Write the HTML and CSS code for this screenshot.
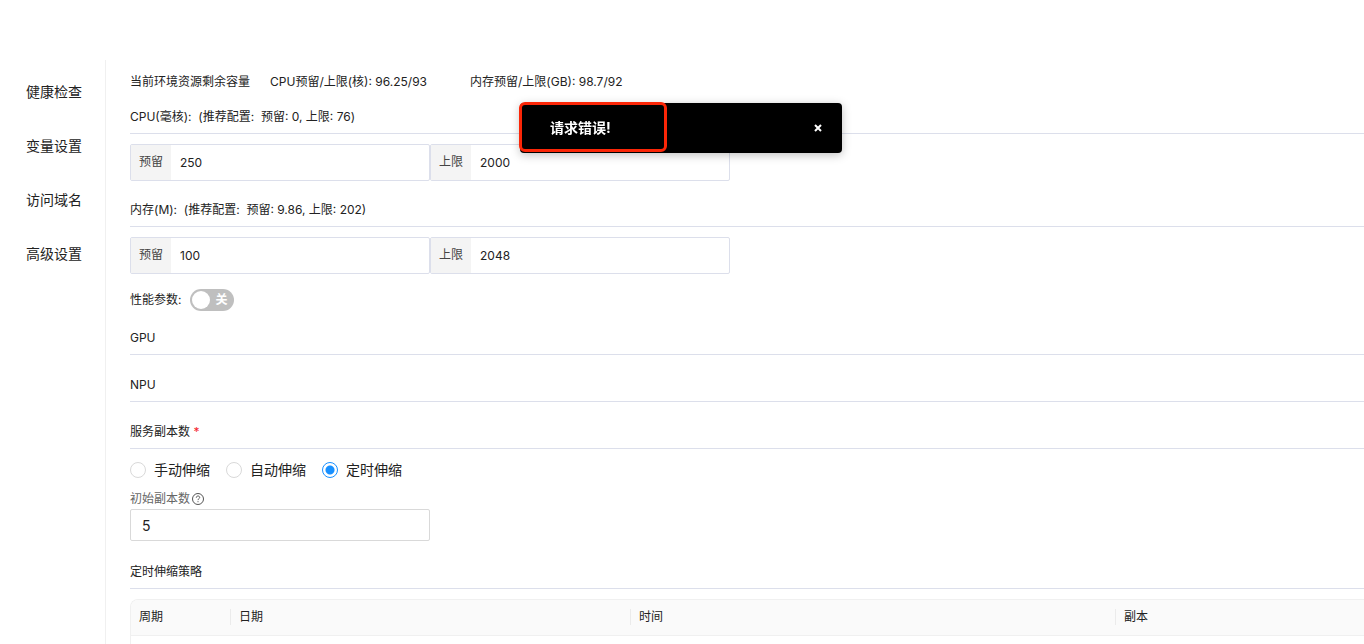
FILE: index.html
```html
<!DOCTYPE html>
<html lang="zh-CN">
<head>
<meta charset="utf-8">
<title>高级设置</title>
<link rel="stylesheet" href="styles.css">
</head>
<body>
<div class="page">
  <nav class="sidebar">
    <a class="nav-link" href="#health">健康检查</a>
    <a class="nav-link" href="#vars">变量设置</a>
    <a class="nav-link" href="#domain">访问域名</a>
    <a class="nav-link" href="#advanced">高级设置</a>
  </nav>
  <main class="content">
    <div class="summary">
      <span>当前环境资源剩余容量</span>
      <span class="quota">CPU预留/上限(核): 96.25/93</span>
      <span class="quota">内存预留/上限(GB): 98.7/92</span>
    </div>

    <h2 class="heading">CPU(毫核):&nbsp; (推荐配置:&nbsp; 预留: 0, 上限: 76)</h2>
    <div class="limits">
      <label class="field"><span class="addon">预留</span><input class="field-input" type="text" value="250"></label>
      <label class="field"><span class="addon">上限</span><input class="field-input" type="text" value="2000"></label>
    </div>

    <h2 class="heading">内存(M):&nbsp; (推荐配置:&nbsp; 预留: 9.86, 上限: 202)</h2>
    <div class="limits">
      <label class="field"><span class="addon">预留</span><input class="field-input" type="text" value="100"></label>
      <label class="field"><span class="addon">上限</span><input class="field-input" type="text" value="2048"></label>
    </div>

    <div class="perf">
      <span id="perf-label">性能参数:</span>
      <button class="switch" type="button" role="switch" aria-checked="false" aria-labelledby="perf-label"><span class="knob"></span><span>关</span></button>
    </div>

    <h2 class="heading heading-spaced">GPU</h2>
    <h2 class="heading heading-spaced">NPU</h2>
    <h2 class="heading">服务副本数 <span class="required">*</span></h2>

    <div class="radios">
      <label class="radio"><input class="radio-input" type="radio" name="scale">手动伸缩</label>
      <label class="radio"><input class="radio-input" type="radio" name="scale">自动伸缩</label>
      <label class="radio"><input class="radio-input" type="radio" name="scale" checked>定时伸缩</label>
    </div>

    <div class="replicas">
      <label class="replicas-label" for="replicas">初始副本数
        <svg class="help" viewBox="0 0 12 12" aria-hidden="true"><circle cx="6" cy="6" r="5.5"/><path d="M4.300 4.700C4.300 3.600 5 3 6 3s1.700.6 1.700 1.500C7.700 5.700 6 5.700 6 7.100"/><path d="M6 8.200v1"/></svg>
      </label>
      <input class="replicas-input" id="replicas" type="text" value="5">
    </div>

    <h2 class="heading">定时伸缩策略</h2>
    <div class="table-wrap">
      <table class="table">
        <colgroup><col class="col-cycle"><col class="col-date"><col class="col-time"><col></colgroup>
        <thead>
          <tr>
            <th><span class="th-text">周期</span></th>
            <th><span class="th-text">日期</span></th>
            <th><span class="th-text">时间</span></th>
            <th>副本</th>
          </tr>
        </thead>
        <tbody><tr><td></td><td></td><td></td><td></td></tr></tbody>
      </table>
    </div>
  </main>
</div>

<div class="toast" role="alert">
  <span class="toast-text">请求错误!</span>
  <button class="toast-close" type="button" aria-label="关闭"><svg class="cross" viewBox="0 0 8 8"><path d="M1 1l6 6M7 1L1 7"/></svg></button>
  <div class="marker"></div>
</div>
</body>
</html>
```
FILE: styles.css
```css
* { box-sizing: border-box; }
body {
  margin: 0;
  height: 100vh;
  overflow: hidden;
  background: #fff;
  color: #222;
  font: 12px/20px Inter, "Noto Sans CJK SC", sans-serif;
}
input, button { font: inherit; color: inherit; }
.page { display: flex; min-height: 100vh; padding-top: 60px; }
.sidebar {
  flex: none;
  width: 106px;
  padding: 5px 0 0 26px;
  border-right: 1px solid #f0f0f0;
}
.nav-link {
  display: block;
  color: inherit;
  font-size: 14px;
  line-height: 54px;
  text-decoration: none;
}
.content { flex: 1; min-width: 0; padding: 12px 0 0 24px; }
.summary { display: flex; gap: 20px; margin-bottom: 14px; }
.quota { min-width: 180px; }
.heading {
  margin: 0 0 10px;
  padding: 1px 0 6px;
  border-bottom: 1px solid #dcdfeb;
  font-size: 12px;
  font-weight: 400;
  line-height: 20px;
}
.heading-spaced { margin-bottom: 19px; }
.required { color: #f5222d; }
.limits { display: flex; max-width: 600px; margin-bottom: 18px; }
.field {
  display: flex;
  flex: 1;
  height: 37px;
  border: 1px solid #dcdfeb;
  border-radius: 2px;
}
.addon {
  width: 40px;
  background: #f4f4f4;
  color: #444;
  line-height: 34px;
  text-align: center;
}
.field-input {
  flex: 1;
  min-width: 0;
  padding: 0 9px;
  border: 0;
  background: none;
  outline: 0;
}
.perf { display: flex; align-items: center; gap: 9px; margin: -3px 0 16px; }
.switch {
  display: flex;
  align-items: center;
  justify-content: space-between;
  width: 44px;
  height: 22px;
  padding: 0 7px 0 2px;
  border: 0;
  border-radius: 11px;
  background: #bfbfbf;
  color: #fff;
  font-weight: 700;
}
.knob { width: 18px; height: 18px; border-radius: 50%; background: #fff; }
.radios { display: flex; gap: 16px; margin-bottom: 8px; }
.radio { display: flex; align-items: center; gap: 8px; font-size: 14px; line-height: 22px; }
.radio-input {
  width: 16px;
  height: 16px;
  margin: 0;
  appearance: none;
  border: 1px solid #d9d9d9;
  border-radius: 50%;
}
.radio-input:checked {
  border-color: #1890ff;
  background: radial-gradient(circle, #1890ff 4px, #fff 5px);
}
.replicas { max-width: 300px; margin-bottom: 20px; }
.replicas-label {
  display: flex;
  align-items: center;
  gap: 2px;
  color: #666;
}
.help { width: 12px; height: 12px; overflow: visible; fill: none; stroke: #555; stroke-width: 1; }
.replicas-input {
  display: block;
  width: 100%;
  height: 32px;
  padding: 0 11px;
  border: 1px solid #d9d9d9;
  border-radius: 2px;
  font-size: 14px;
  outline: 0;
}
.table-wrap {
  overflow: hidden;
  border: 1px solid #f0f0f0;
  border-right: 0;
  border-radius: 8px 0 0 0;
}
.table { width: 100%; border-collapse: separate; border-spacing: 0; table-layout: fixed; }
.col-cycle { width: 100px; }
.col-date { width: 400px; }
.col-time { width: 485px; }
.table th {
  height: 36px;
  padding: 0 0 2px 8px;
  border-bottom: 1px solid #f0f0f0;
  background: #fafafa;
  font-weight: 400;
  text-align: left;
}
.table td { height: 36px; }
.th-text { display: block; border-right: 1px solid #ebebeb; line-height: 16px; }
.toast {
  position: fixed;
  top: 103px;
  left: 50%;
  display: flex;
  align-items: center;
  justify-content: space-between;
  width: 322px;
  height: 50px;
  margin-left: -162px;
  padding: 0 18px 0 30px;
  border-radius: 4px;
  background: #000;
  box-shadow: 0 2px 10px rgba(0, 0, 0, 0.25);
  color: #fff;
  font-size: 14px;
  font-weight: 700;
}
.toast-close { display: flex; padding: 2px; border: 0; background: none; }
.cross { width: 8px; height: 8px; fill: none; stroke: #fff; stroke-width: 2; }
.marker {
  position: absolute;
  top: -1px;
  left: -1px;
  width: 148px;
  height: 50px;
  border: 3px solid #fb2607;
  border-radius: 6px;
}
```
